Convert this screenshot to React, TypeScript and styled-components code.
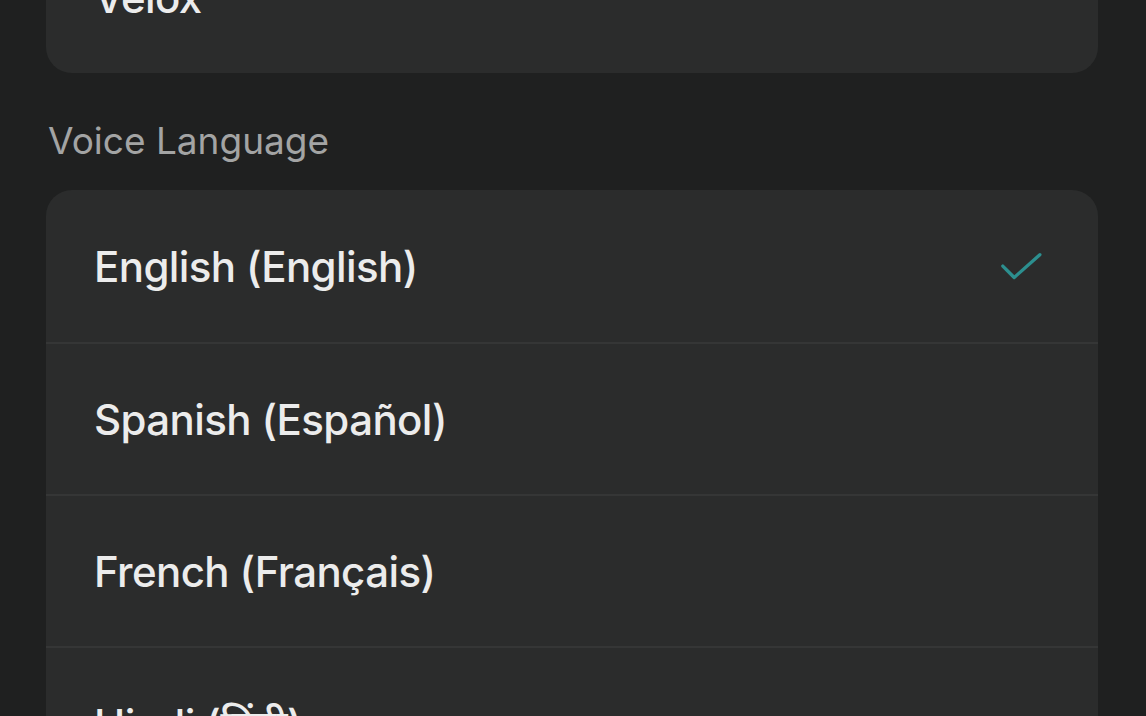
import React from "react";
import styled, { createGlobalStyle } from "styled-components";

const Global = createGlobalStyle`
  html, body {
    margin: 0;
    padding: 0;
    background: #1f2020;
    overflow: hidden;
  }
  body {
    font-family: Inter, "Noto Sans", "Noto Sans CJK SC", sans-serif;
    -webkit-font-smoothing: antialiased;
  }
`;

const Page = styled.div`
  width: 1146px;
  height: 716px;
  overflow: hidden;
  background: #1f2020;
  box-sizing: border-box;
  padding: 0 48px 0 46px;
`;

const Content = styled.div`
  margin-top: -79px;
  display: flex;
  flex-direction: column;
`;

const Card = styled.div`
  background: #2b2c2c;
  border-radius: 26px;
  overflow: hidden;
  display: flex;
  flex-direction: column;
`;

const SectionLabel = styled.div`
  margin-top: 46px;
  margin-bottom: 28px;
  padding-left: 2px;
  font-size: 37px;
  line-height: 43px;
  font-weight: 400;
  color: #a3a4a4;
`;

const Row = styled.div<{ $divider?: boolean }>`
  height: 152px;
  box-sizing: border-box;
  display: flex;
  align-items: center;
  justify-content: space-between;
  padding: 0 52px 0 48px;
  border-top: ${(p) => (p.$divider ? "2px solid #353636" : "none")};
`;

const RowText = styled.span`
  font-size: 42px;
  font-weight: 500;
  color: #ececec;
  letter-spacing: -0.6px;
`;

const Check = () => (
  <svg width="48" height="48" viewBox="0 0 48 48" fill="none">
    <path
      d="M4 18 L16 30 L43 6"
      stroke="#2c8f8f"
      strokeWidth="3.5"
      strokeLinecap="round"
      strokeLinejoin="round"
      transform="translate(1 7) scale(0.95)"
    />
  </svg>
);

const languages = [
  { label: "English (English)", selected: true },
  { label: "Spanish (Español)" },
  { label: "French (Français)" },
  { label: "Hindi (हिंदी)" },
];

export default function App() {
  return (
    <Page>
      <Global />
      <Content>
        <Card>
          <Row>
            <RowText>Velox</RowText>
          </Row>
        </Card>
        <SectionLabel>Voice Language</SectionLabel>
        <Card>
          {languages.map((l, i) => (
            <Row key={l.label} $divider={i > 0}>
              <RowText>{l.label}</RowText>
              {l.selected && <Check />}
            </Row>
          ))}
        </Card>
      </Content>
    </Page>
  );
}
